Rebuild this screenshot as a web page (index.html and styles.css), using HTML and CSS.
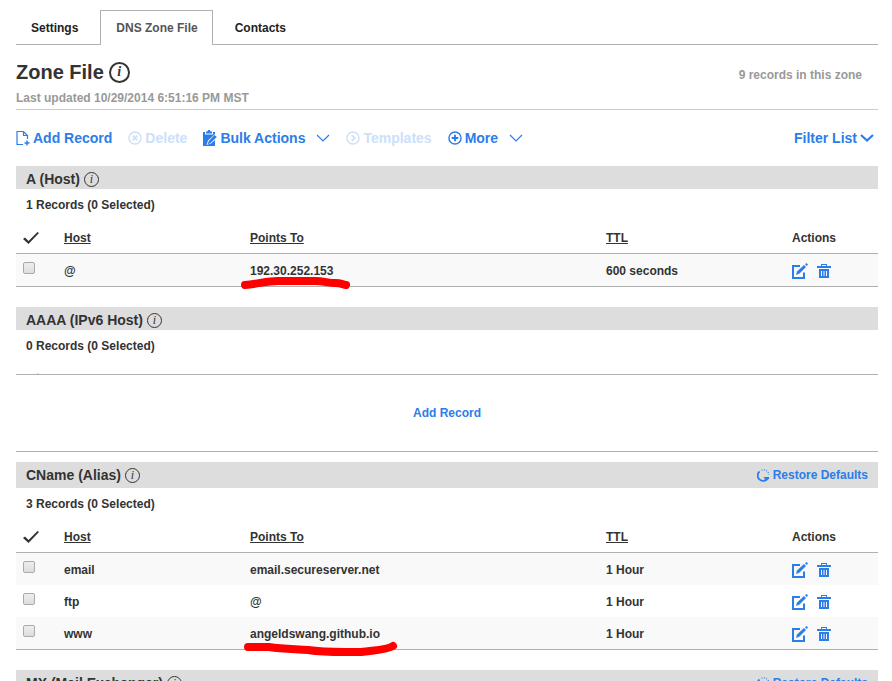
FILE: index.html
```html
<!DOCTYPE html>
<html lang="en">
<head>
<meta charset="utf-8">
<title>DNS Zone File</title>
<link rel="stylesheet" href="styles.css">
</head>
<body>
<svg class="sprite" aria-hidden="true">
  <symbol id="page-add" viewBox="0 0 14 16"><path d="M7 14.500H1V1.500H7.500L11.500 5.500V9M7.500 1.500V5.500H11.500" fill="none" stroke="currentColor" stroke-width="1.200"/><path d="M11 10.500V15.500M8.500 13H13.500" stroke="currentColor" stroke-width="1.400"/></symbol>
  <symbol id="circle-x" viewBox="0 0 15 15"><circle cx="7.500" cy="7.500" r="6.500" fill="none" stroke="currentColor" stroke-width="1.500"/><path d="M5 5L10 10M10 5L5 10" stroke="currentColor" stroke-width="1.800"/></symbol>
  <symbol id="circle-right" viewBox="0 0 15 15"><circle cx="7.500" cy="7.500" r="6.500" fill="none" stroke="currentColor" stroke-width="1.500"/><path d="M6 4.500L9.500 7.500L6 10.500" fill="none" stroke="currentColor" stroke-width="1.800"/></symbol>
  <symbol id="circle-plus" viewBox="0 0 15 15"><circle cx="7.500" cy="7.500" r="6.500" fill="none" stroke="currentColor" stroke-width="1.500"/><path d="M7.500 4V11M4 7.500H11" stroke="currentColor" stroke-width="2"/></symbol>
  <symbol id="clipboard" viewBox="0 0 14 16"><path d="M0 2H2V4.500H10V2H12V4L5 10.500L3.500 15L8 13.500L12 10V16H0Z" fill="currentColor"/><path d="M3 3.500V1.500H4.500L5 0H7L7.500 1.500H9V3.500Z" fill="currentColor"/><path d="M11.500 5L13.800 7L7.500 13L4.500 14.500L5.800 11Z" fill="currentColor"/></symbol>
  <symbol id="chevron" viewBox="0 0 14 8"><path d="M1 1L7 7L13 1" fill="none" stroke="currentColor" stroke-width="1.200"/></symbol>
  <symbol id="chevron-bold" viewBox="0 0 14 8"><path d="M1 1L7 6.500L13 1" fill="none" stroke="currentColor" stroke-width="2.200"/></symbol>
  <symbol id="check" viewBox="0 0 16 12"><path d="M0 7L2 5.500L5.500 9L14.500 0L16 1L5.500 12Z" fill="currentColor"/></symbol>
  <symbol id="edit" viewBox="0 0 16 16"><path d="M8 3H1V15H12V9.500" fill="none" stroke="currentColor" stroke-width="2"/><path d="M4 12L5 8.500L12 2L14 4L7.500 10.500Z" fill="currentColor"/><path d="M13 1.200L14.500 0L16 1.500L14.800 3Z" fill="currentColor"/></symbol>
  <symbol id="trash" viewBox="0 0 14 14"><path d="M0 2H4V0H10V2H14V4H0ZM5 1V2H9V1ZM2 5H12V14H2ZM4 7V12H5V7ZM6.500 7V12H7.500V7ZM9 7V12H10V7Z" fill="currentColor" fill-rule="evenodd"/></symbol>
  <symbol id="restore" viewBox="0 0 13 13"><path d="M2.500 2.500A5 5 0 1 0 9.500 10.500" fill="none" stroke="currentColor" stroke-width="1.800"/><path d="M6.500 8H12V9.500L9.500 12Z" fill="currentColor"/><path d="M4.500 1.200A5.300 5.300 0 0 1 11.800 6" fill="none" stroke="currentColor" stroke-width="1.200" stroke-dasharray="1 1.400"/></symbol>
</svg>

<nav class="tabs">
  <a class="tab" href="#settings">Settings</a>
  <a class="tab tab-active" href="#zone" aria-current="page">DNS Zone File</a>
  <a class="tab" href="#contacts">Contacts</a>
</nav>

<main id="zone">
  <header class="page-head">
    <div>
      <h1>Zone File <button class="info info-large" type="button">i</button></h1>
      <p class="muted">Last updated 10/29/2014 6:51:16 PM MST</p>
    </div>
    <p class="muted total">9 records in this zone</p>
  </header>

  <div class="toolbar">
    <button class="tool" type="button"><svg class="tool-icon"><use href="#page-add"/></svg>Add Record</button>
    <button class="tool" type="button" disabled><svg class="tool-icon"><use href="#circle-x"/></svg>Delete</button>
    <button class="tool" type="button"><svg class="tool-icon"><use href="#clipboard"/></svg>Bulk Actions<svg class="chevron spaced"><use href="#chevron"/></svg></button>
    <button class="tool" type="button" disabled><svg class="tool-icon"><use href="#circle-right"/></svg>Templates</button>
    <button class="tool" type="button"><svg class="tool-icon"><use href="#circle-plus"/></svg>More<svg class="chevron spaced"><use href="#chevron"/></svg></button>
    <button class="tool filter" type="button">Filter List<svg class="chevron"><use href="#chevron-bold"/></svg></button>
  </div>

  <section>
    <div class="section-head"><h2>A (Host) <button class="info" type="button">i</button></h2></div>
    <p class="count">1 Records (0 Selected)</p>
    <table>
      <thead><tr><th class="col-check"><svg class="check"><use href="#check"/></svg></th><th class="col-host"><a href="#host">Host</a></th><th><a href="#points">Points To</a></th><th class="col-ttl"><a href="#ttl">TTL</a></th><th class="col-actions">Actions</th></tr></thead>
      <tbody>
        <tr><td><input type="checkbox" aria-label="@"></td><td>@</td><td><span class="marked">192.30.252.153<svg class="mark" width="110" height="12" viewBox="0 0 110 12"><path d="M5 8C18 7 27 4 38 4H75C84 4 88 6 95 6C100 6 102 7 106 8" /></svg></span></td><td>600 seconds</td><td><div class="actions"><button type="button" aria-label="Edit"><svg class="edit"><use href="#edit"/></svg></button><button type="button" aria-label="Delete"><svg class="trash"><use href="#trash"/></svg></button></div></td></tr>
      </tbody>
    </table>
  </section>

  <section>
    <div class="section-head"><h2>AAAA (IPv6 Host) <button class="info" type="button">i</button></h2></div>
    <p class="count">0 Records (0 Selected)</p>
    <div class="collapsed"><svg class="check"><use href="#check"/></svg></div>
    <div class="empty"><a href="#add">Add Record</a></div>
  </section>

  <section class="after-empty">
    <div class="section-head section-head-tall"><h2>CName (Alias) <button class="info" type="button">i</button></h2><button class="restore" type="button"><svg><use href="#restore"/></svg>Restore Defaults</button></div>
    <p class="count">3 Records (0 Selected)</p>
    <table>
      <thead><tr><th class="col-check"><svg class="check"><use href="#check"/></svg></th><th class="col-host"><a href="#host">Host</a></th><th><a href="#points">Points To</a></th><th class="col-ttl"><a href="#ttl">TTL</a></th><th class="col-actions">Actions</th></tr></thead>
      <tbody>
        <tr><td><input type="checkbox" aria-label="email"></td><td>email</td><td>email.secureserver.net</td><td>1 Hour</td><td><div class="actions"><button type="button" aria-label="Edit"><svg class="edit"><use href="#edit"/></svg></button><button type="button" aria-label="Delete"><svg class="trash"><use href="#trash"/></svg></button></div></td></tr>
        <tr><td><input type="checkbox" aria-label="ftp"></td><td>ftp</td><td>@</td><td>1 Hour</td><td><div class="actions"><button type="button" aria-label="Edit"><svg class="edit"><use href="#edit"/></svg></button><button type="button" aria-label="Delete"><svg class="trash"><use href="#trash"/></svg></button></div></td></tr>
        <tr><td><input type="checkbox" aria-label="www"></td><td>www</td><td><span class="marked">angeldswang.github.io<svg class="mark mark-wide" width="154" height="16" viewBox="0 0 154 16"><path d="M5 7H26C40 9 52 9 65 10C78 12 88 12 102 12H118C132 10 144 10 150 6" /></svg></span></td><td>1 Hour</td><td><div class="actions"><button type="button" aria-label="Edit"><svg class="edit"><use href="#edit"/></svg></button><button type="button" aria-label="Delete"><svg class="trash"><use href="#trash"/></svg></button></div></td></tr>
      </tbody>
    </table>
  </section>

  <section>
    <div class="section-head section-head-tall"><h2>MX (Mail Exchanger) <button class="info" type="button">i</button></h2><button class="restore" type="button"><svg><use href="#restore"/></svg>Restore Defaults</button></div>
  </section>
</main>
</body>
</html>
```
FILE: styles.css
```css
* { box-sizing: border-box; }

body {
  margin: 0;
  height: 100vh;
  overflow: hidden;
  padding: 10px 14px 0 16px;
  background: #fff;
  color: #333;
  font: bold 12px/16px "Liberation Sans", Arial, sans-serif;
}

h1, h2, p { margin: 0; }
svg { display: block; flex: none; }
a { color: inherit; }
button {
  margin: 0;
  padding: 0;
  border: 0;
  background: none;
  color: inherit;
  font: inherit;
}
.sprite { position: absolute; width: 0; height: 0; }

.tabs {
  display: flex;
  gap: 7px;
  height: 35px;
  border-bottom: 1px solid #b0b0b0;
}
.tab {
  height: 35px;
  padding: 10px 15px 0;
  color: #222;
  text-decoration: none;
}
.tab-active {
  padding: 9px 14px 0 15px;
  border: 1px solid #b0b0b0;
  border-bottom: 0;
  background: #fff;
  color: #555;
}

.page-head {
  display: flex;
  justify-content: space-between;
  height: 65px;
  padding-top: 15px;
  border-bottom: 1px solid #ccc;
}
h1 {
  display: flex;
  align-items: center;
  gap: 5px;
  margin-bottom: 6px;
  font-size: 20px;
  line-height: 24px;
}
.muted { color: #999; }
.total { padding: 7px 16px 0 0; }

.info {
  width: 15px;
  height: 15px;
  border: 1px solid #333;
  border-radius: 50%;
  font: italic 12px/12px "Liberation Serif", serif;
  text-align: center;
}
.info-large {
  width: 21px;
  height: 21px;
  border-width: 2px;
  font-size: 14px;
  font-weight: bold;
  line-height: 16px;
}

.toolbar {
  display: flex;
  align-items: center;
  gap: 16px;
  height: 56px;
  color: #2b7de9;
  font-size: 14px;
}
.tool {
  display: flex;
  align-items: center;
  gap: 3px;
  white-space: nowrap;
}
.tool:disabled { color: #cce0fa; }
.tool-icon { width: 14px; height: 16px; }
.chevron { width: 14px; height: 8px; }
.spaced { margin-left: 8px; }
.filter { margin-left: auto; padding-right: 4px; }

section { margin-bottom: 20px; }
.section-head {
  display: flex;
  align-items: center;
  justify-content: space-between;
  height: 23px;
  padding: 3px 10px 0;
  background: #ddd;
}
.section-head-tall { height: 26px; padding-top: 0; }
h2 {
  display: flex;
  align-items: center;
  gap: 4px;
  font-size: 14px;
}
.restore {
  display: flex;
  align-items: center;
  gap: 3px;
  color: #2b7de9;
}
.restore svg { width: 13px; height: 13px; }
.count { padding: 8px 10px 9px; }

table {
  width: 100%;
  border-collapse: separate;
  border-spacing: 0;
  border-bottom: 1px solid #b0b0b0;
  table-layout: fixed;
}
th, td {
  height: 32px;
  padding: 0;
  text-align: left;
  vertical-align: middle;
}
th {
  border-bottom: 1px solid #b0b0b0;
}
td { padding-top: 2px; }
tbody tr:nth-child(odd) { background: #f9f9f9; }
.col-check { width: 48px; }
.col-host, .col-ttl { width: 186px; }
.col-actions { width: 86px; }
.check { width: 16px; height: 12px; margin-left: 7px; }

input[type="checkbox"] {
  appearance: none;
  display: block;
  width: 12px;
  height: 12px;
  margin: 0 0 6px 7px;
  border: 1px solid #aaa;
  border-radius: 2px;
  background: linear-gradient(#eee, #ddd);
}

.actions {
  display: flex;
  align-items: center;
  gap: 9px;
  color: #2b7de9;
}
.edit { width: 16px; height: 16px; }
.trash { width: 14px; height: 14px; }

.marked { position: relative; }
.mark {
  position: absolute;
  top: 13px;
  left: -10px;
  overflow: visible;
  fill: none;
  stroke: #f00;
  stroke-width: 8px;
  stroke-linecap: round;
  stroke-linejoin: round;
}
.mark-wide { left: -7px; }

.collapsed {
  height: 1px;
  margin-top: 10px;
  overflow: hidden;
  opacity: 0.3;
}
.empty {
  display: grid;
  place-items: center;
  height: 78px;
  border: solid #b0b0b0;
  border-width: 1px 0;
}
.empty a { color: #2b7de9; text-decoration: none; }
.after-empty { margin-top: -10px; }
```
